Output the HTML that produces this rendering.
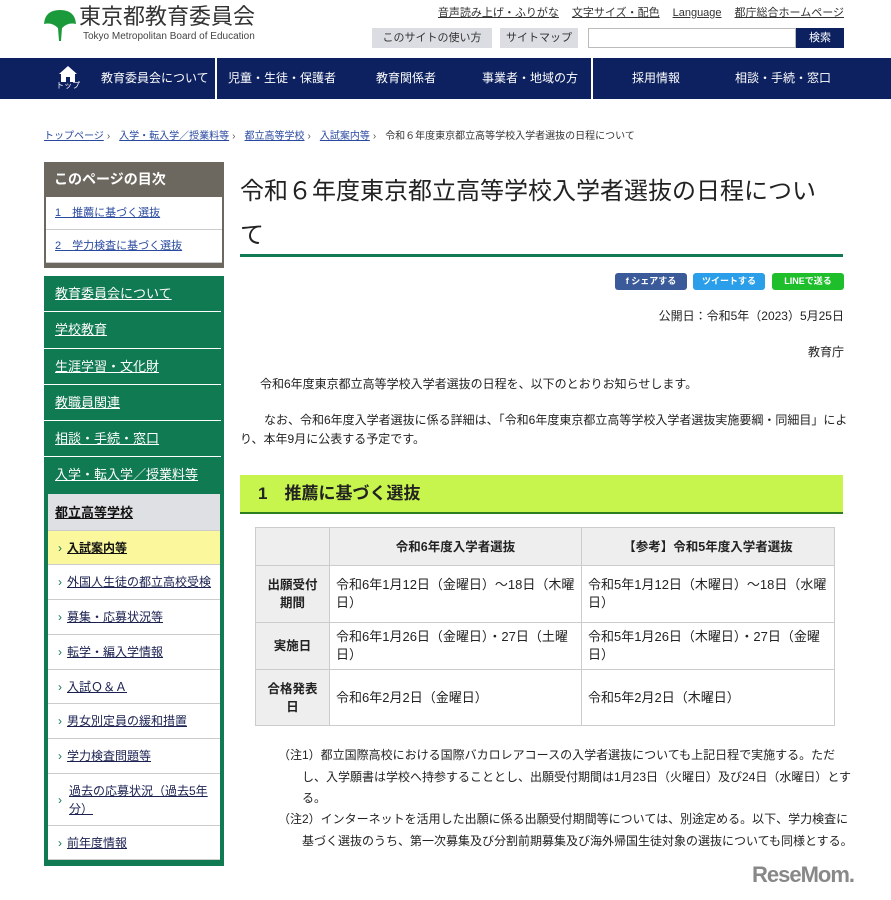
<!DOCTYPE html>
<html><head><meta charset="utf-8"><style>
*{margin:0;padding:0;box-sizing:border-box}
body{width:891px;height:900px;overflow:hidden;background:#fff;font-family:"Liberation Sans","Noto Sans CJK JP",sans-serif;color:#222;font-size:12px;position:relative}
a{color:#222;text-decoration:underline}
.abs{position:absolute}
.toplinks{position:absolute;top:4px;right:47px;font-size:11px;white-space:nowrap}
.toplinks a{margin-left:13px;color:#333}
.btn{position:absolute;top:28px;height:20px;background:#dcdde3;font-size:11px;line-height:20px;text-align:center;color:#333}
.nav{position:absolute;top:58px;left:0;width:891px;height:41px;background:#0d2160}
.nav span{position:absolute;top:0;line-height:41px;color:#fff;font-size:12px;white-space:nowrap}
.sep{position:absolute;top:0;width:2px;height:41px;background:#fff}
.bc{position:absolute;top:127px;left:44px;font-size:10px;color:#333;white-space:nowrap}
.bc a{color:#2a4aa0;margin-right:3px}
.bc i{font-style:normal;margin-right:9px;color:#555}
.toc{position:absolute;left:44px;top:162px;width:180px;height:106px;background:#6d685f}
.toc h3{color:#fff;font-size:14px;font-weight:bold;height:35px;line-height:35px;padding-left:10px}
.toc div{background:#fff;margin:0 2px;height:33px;line-height:33px;padding-left:9px;font-size:11px;border-bottom:1px solid #ccc}
.toc div a{color:#2a4aa0}
.menu{position:absolute;left:44px;top:276px;width:180px;height:590px;background:#107a52}
.gi{height:36.3px;line-height:36px;padding-left:11px;font-size:13px;border-bottom:1px solid #fff;margin:0 3px 0 0}
.gi a{color:#fff}
.wi{background:#fff;margin:0 4px;height:34.7px;line-height:34px;border-bottom:1px solid #ccc;font-size:12px;padding-left:10px}
.wi a{color:#1a2050}
.wi b{color:#107a52;font-weight:normal;margin-right:5px}
h1{position:absolute;left:240px;top:170px;width:603px;font-size:24px;font-weight:normal;line-height:44px;color:#222;white-space:nowrap}
.gline{position:absolute;left:240px;top:254px;width:603px;height:3px;background:#107a52}
.sh{position:absolute;top:273px;height:17px;border-radius:3px;color:#fff;font-size:9px;line-height:17px;text-align:center;font-weight:bold}
.p{position:absolute;font-size:12px;line-height:19px;white-space:nowrap}
.sec{position:absolute;left:240px;top:475px;width:603px;height:39px;background:#c7f54e;border-bottom:2px solid #2e7d1e;font-size:17px;font-weight:bold;line-height:37px;padding-left:18px}
table{position:absolute;left:255px;top:527px;width:580px;border-collapse:collapse;font-size:13px}
td,th{border:1px solid #ccc;padding:0 6px;line-height:18px;vertical-align:middle;text-align:left;font-weight:normal}
th{background:#eee;font-weight:bold;text-align:center;font-size:12.5px}
.note{position:absolute;left:278px;width:580px;font-size:12px;line-height:21.5px;white-space:nowrap}
</style></head><body>
<svg class="abs" style="left:43px;top:8px" width="34" height="34" viewBox="0 0 34 34"><path d="M1 16 Q2 2 17 2 Q32 2 33 16 Q25 14 19 20 L18 33 L16 33 L15 20 Q9 14 1 16Z" fill="#1a9a3a"/></svg>
<div class="abs" style="left:79px;top:4px;font-size:22px;line-height:26px;color:#333">東京都教育委員会</div>
<div class="abs" style="left:83px;top:31px;font-size:10px;line-height:11px;color:#444">Tokyo Metropolitan Board of Education</div>
<div class="toplinks"><a>音声読み上げ・ふりがな</a><a>文字サイズ・配色</a><a>Language</a><a>都庁総合ホームページ</a></div>
<div class="btn" style="left:372px;width:120px">このサイトの使い方</div>
<div class="btn" style="left:500px;width:78px">サイトマップ</div>
<div class="abs" style="left:588px;top:28px;width:208px;height:20px;border:1px solid #bbb"></div>
<div class="abs" style="left:796px;top:28px;width:48px;height:20px;background:#0d2160;color:#fff;font-size:11px;line-height:20px;text-align:center">検索</div>
<div class="nav">
<svg class="abs" style="left:59px;top:8px" width="18" height="16" viewBox="0 0 18 16"><path d="M9 0 L18 8 L16 8 L16 16 L11 16 L11 11 L7 11 L7 16 L2 16 L2 8 L0 8Z" fill="#fff"/></svg>
<span style="left:56px;top:22px;line-height:12px;font-size:8px">トップ</span>
<span style="left:101px">教育委員会について</span>
<div class="sep" style="left:215px"></div>
<span style="left:228px">児童・生徒・保護者</span>
<span style="left:376px">教育関係者</span>
<span style="left:482px">事業者・地域の方</span>
<div class="sep" style="left:591px"></div>
<span style="left:632px">採用情報</span>
<span style="left:735px">相談・手続・窓口</span>
</div>
<div class="bc"><a>トップページ</a><i>›</i><a>入学・転入学／授業料等</a><i>›</i><a>都立高等学校</a><i>›</i><a>入試案内等</a><i>›</i>令和６年度東京都立高等学校入学者選抜の日程について</div>
<div class="toc"><h3>このページの目次</h3><div><a>1　推薦に基づく選抜</a></div><div><a>2　学力検査に基づく選抜</a></div></div>
<div class="menu">
<div class="gi"><a>教育委員会について</a></div>
<div class="gi"><a>学校教育</a></div>
<div class="gi"><a>生涯学習・文化財</a></div>
<div class="gi"><a>教職員関連</a></div>
<div class="gi"><a>相談・手続・窓口</a></div>
<div class="gi" style="border:0"><a>入学・転入学／授業料等</a></div>
<div class="wi" style="background:#dfe0e4;height:37px;line-height:37px;font-weight:bold;font-size:13px;padding-left:7px"><a style="color:#111">都立高等学校</a></div>
<div class="wi" style="background:#fbf79c"><b>›</b><a style="color:#111;font-weight:bold">入試案内等</a></div>
<div class="wi"><b>›</b><a>外国人生徒の都立高校受検</a></div>
<div class="wi"><b>›</b><a>募集・応募状況等</a></div>
<div class="wi"><b>›</b><a>転学・編入学情報</a></div>
<div class="wi"><b>›</b><a>入試Ｑ＆Ａ</a></div>
<div class="wi"><b>›</b><a>男女別定員の緩和措置</a></div>
<div class="wi"><b>›</b><a>学力検査問題等</a></div>
<div class="wi" style="height:52px;line-height:18px;padding-top:8px;position:relative"><b style="position:absolute;left:10px;top:17px">›</b><a style="display:block;margin-left:11px">過去の応募状況（過去5年分）</a></div>
<div class="wi"><b>›</b><a>前年度情報</a></div>
</div>
<h1>令和６年度東京都立高等学校入学者選抜の日程につい<br>て</h1>
<div class="gline"></div>
<div class="sh" style="left:615px;width:72px;background:#3b5a9a">f シェアする</div>
<div class="sh" style="left:693px;width:72px;background:#2a9ee8">ツイートする</div>
<div class="sh" style="left:772px;width:72px;background:#1fbf2c">LINEで送る</div>
<div class="p" style="right:47px;top:307px">公開日：令和5年（2023）5月25日</div>
<div class="p" style="right:47px;top:343px">教育庁</div>
<div class="p" style="left:260px;top:375px">令和6年度東京都立高等学校入学者選抜の日程を、以下のとおりお知らせします。</div>
<div class="p" style="left:240px;top:411px">　　なお、令和6年度入学者選抜に係る詳細は、「令和6年度東京都立高等学校入学者選抜実施要綱・同細目」によ<br>り、本年9月に公表する予定です。</div>
<div class="sec">1　推薦に基づく選抜</div>
<table>
<tr style="height:38px"><th style="width:74px"></th><th style="width:252px">令和6年度入学者選抜</th><th>【参考】令和5年度入学者選抜</th></tr>
<tr style="height:57px"><th>出願受付<br>期間</th><td>令和6年1月12日（金曜日）～18日（木曜<br>日）</td><td>令和5年1月12日（木曜日）～18日（水曜<br>日）</td></tr>
<tr style="height:47px"><th>実施日</th><td>令和6年1月26日（金曜日）・27日（土曜<br>日）</td><td>令和5年1月26日（木曜日）・27日（金曜<br>日）</td></tr>
<tr style="height:56px"><th>合格発表<br>日</th><td>令和6年2月2日（金曜日）</td><td>令和5年2月2日（木曜日）</td></tr>
</table>
<div class="note" style="top:745px">（注1）都立国際高校における国際バカロレアコースの入学者選抜についても上記日程で実施する。ただ<br>　　し、入学願書は学校へ持参することとし、出願受付期間は1月23日（火曜日）及び24日（水曜日）とす<br>　　る。</div>
<div class="note" style="top:809px">（注2）インターネットを活用した出願に係る出願受付期間等については、別途定める。以下、学力検査に<br>　　基づく選抜のうち、第一次募集及び分割前期募集及び海外帰国生徒対象の選抜についても同様とする。</div>
<div class="abs" style="left:752px;top:862px;font-size:22px;font-weight:bold;color:#888;letter-spacing:-1px">ReseMom.</div>
</body></html>
